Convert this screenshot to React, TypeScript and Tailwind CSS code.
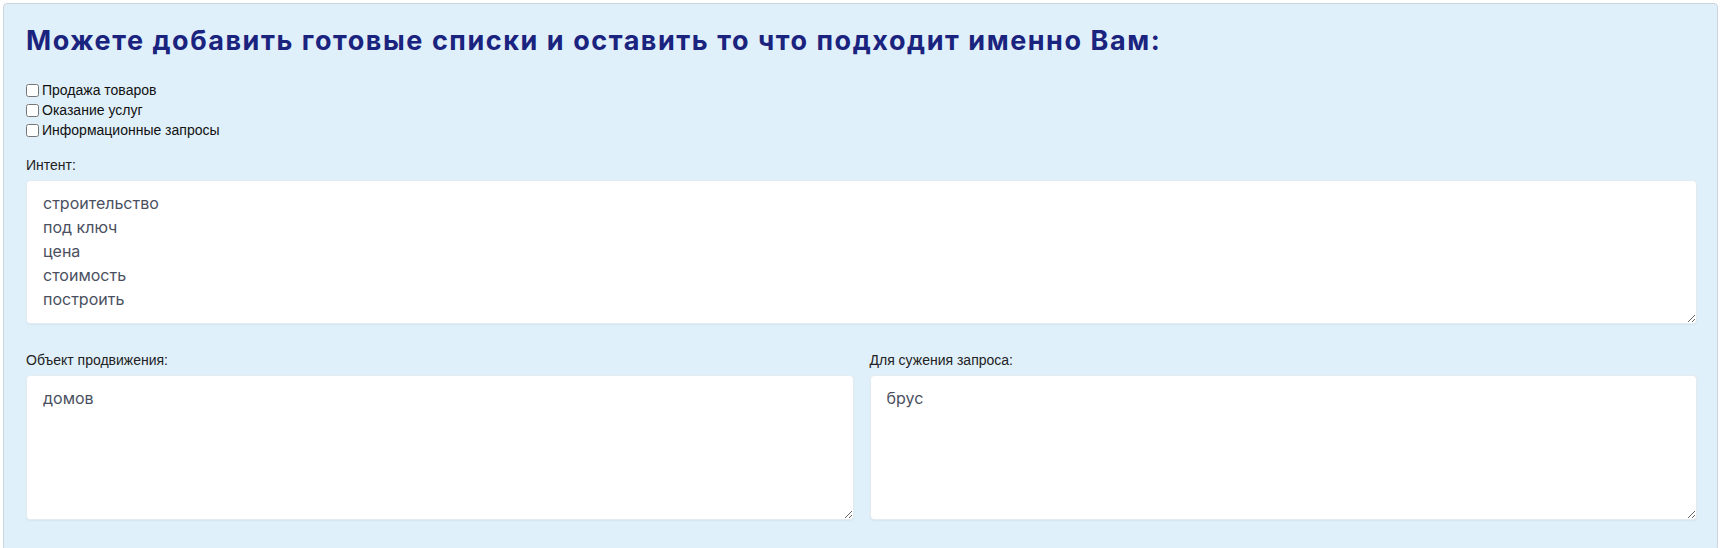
import React from "react";

const areaCls =
  "block w-full resize bg-white border border-[#e3eaf0] rounded-[4px] shadow-[0_1px_2px_rgba(30,60,90,0.06)] px-4 py-[10px] text-[16px] leading-[24px] text-[#4a5060] outline-none";

const sans = { fontFamily: '"Liberation Sans", Arial, sans-serif' } as const;

export default function App() {
  return (
    <div className="w-[1724px] h-[548px] overflow-hidden bg-white pt-[3px] pl-[3px]">
      <div
        className="w-[1715px] bg-[#e0f0fa] border border-[#cdd5dc] rounded-[4px] pl-[22px] pr-[20px] pt-[19px] pb-[30px]"
        style={sans}
      >
        <h2 className="font-['Inter',sans-serif] font-bold text-[27px] leading-[36px] text-[#1a237e] tracking-[1.55px]">
          Можете добавить готовые списки и оставить то что подходит именно Вам:
        </h2>

        <div className="mt-[21px] flex flex-col text-[14px] text-[#111]">
          {["Продажа товаров", "Оказание услуг", "Информационные запросы"].map((t) => (
            <label key={t} className="flex items-center h-5">
              <input type="checkbox" className="m-0 mr-[3px] w-[13px] h-[13px]" />
              <span>{t}</span>
            </label>
          ))}
        </div>

        <div className="mt-[15px]">
          <div className="text-[14px] leading-5 text-[#222] mb-[5px]">Интент:</div>
          <textarea
            className={areaCls + " h-[144px] font-['Inter',sans-serif]"}
            defaultValue={"строительство\nпод ключ\nцена\nстоимость\nпостроить"}
          />
        </div>

        <div className="mt-[26px] grid grid-cols-2 gap-4">
          <div>
            <div className="text-[14px] leading-5 text-[#222] mb-[5px]">Объект продвижения:</div>
            <textarea className={areaCls + " h-[145px] font-['Inter',sans-serif]"} defaultValue="домов" />
          </div>
          <div>
            <div className="text-[14px] leading-5 text-[#222] mb-[5px]">Для сужения запроса:</div>
            <textarea className={areaCls + " h-[145px] font-['Inter',sans-serif]"} defaultValue="брус" />
          </div>
        </div>
      </div>
    </div>
  );
}
